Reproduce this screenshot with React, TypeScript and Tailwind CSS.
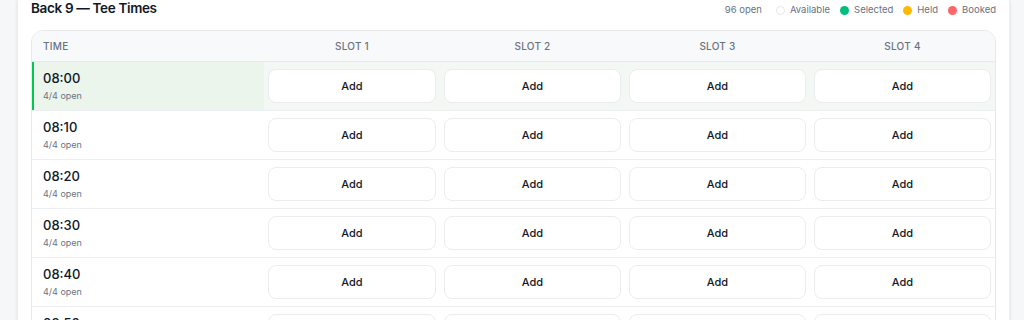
const TIMES = ['08:00', '08:10', '08:20', '08:30', '08:40', '08:50', '09:00'];
const SLOTS = ['Slot 1', 'Slot 2', 'Slot 3', 'Slot 4'];

const LEGEND = [
  { label: 'Available', dot: 'bg-white border border-gray-200' },
  { label: 'Selected', dot: 'bg-emerald-500' },
  { label: 'Held', dot: 'bg-amber-400' },
  { label: 'Booked', dot: 'bg-red-400' },
];

const cols = 'grid grid-cols-[232px_176px_185px_185px_1fr]';

export default function App() {
  const selected = '08:00';

  return (
    <div className="min-h-screen w-full bg-[#f6f7f8] font-['Inter',sans-serif] text-gray-900">
      <div className="ml-[17px] mr-[14px] min-h-screen border-x border-[#eceef0] bg-white px-[13px] shadow-sm">
        <div className="flex h-[17px] items-center justify-between">
          <h2 className="text-[13.5px] font-semibold tracking-tight text-gray-900">Back 9 — Tee Times</h2>
          <div className="flex items-center gap-[10px] pt-[4px] text-[9.5px] text-gray-500">
            <span className="mr-[4px]">96 open</span>
            {LEGEND.map((l) => (
              <span key={l.label} className="flex items-center gap-[5px]">
                <span className={`h-[9px] w-[9px] rounded-full ${l.dot}`} />
                {l.label}
              </span>
            ))}
          </div>
        </div>

        <div className="mt-[13px] overflow-hidden rounded-xl border border-[#e6e8eb]">
          <div className={`${cols} h-[31px] items-center border-b border-[#e6e8eb] bg-[#f8f9fa] text-[10px] font-medium uppercase tracking-wide text-gray-500`}>
            <div className="pl-[11px]">Time</div>
            {SLOTS.map((s) => (
              <div key={s} className="text-center">{s}</div>
            ))}
          </div>

          {TIMES.map((t) => {
            const isSel = t === selected;
            return (
              <div
                key={t}
                className={`${cols} h-[49px] border-b border-[#eceef0] ${isSel ? 'bg-[#f4f8f4]' : 'bg-white'}`}
              >
                <div
                  className={`flex flex-col justify-center border-l-2 pl-[9px] ${
                    isSel ? 'border-green-500 bg-[#ebf5ec]' : 'border-transparent'
                  }`}
                >
                  <span className="text-[13px] font-medium leading-[16px] text-gray-900">{t}</span>
                  <span className="mt-[4px] text-[9px] leading-[12px] text-gray-500">4/4 open</span>
                </div>
                {SLOTS.map((s) => (
                  <div key={s} className="flex items-center px-[4px] py-[7px]">
                    <button
                      type="button"
                      className="h-[34px] w-full rounded-lg border border-[#eaecef] bg-white text-[11px] font-medium text-gray-900"
                    >
                      Add
                    </button>
                  </div>
                ))}
              </div>
            );
          })}
        </div>
      </div>
    </div>
  );
}
